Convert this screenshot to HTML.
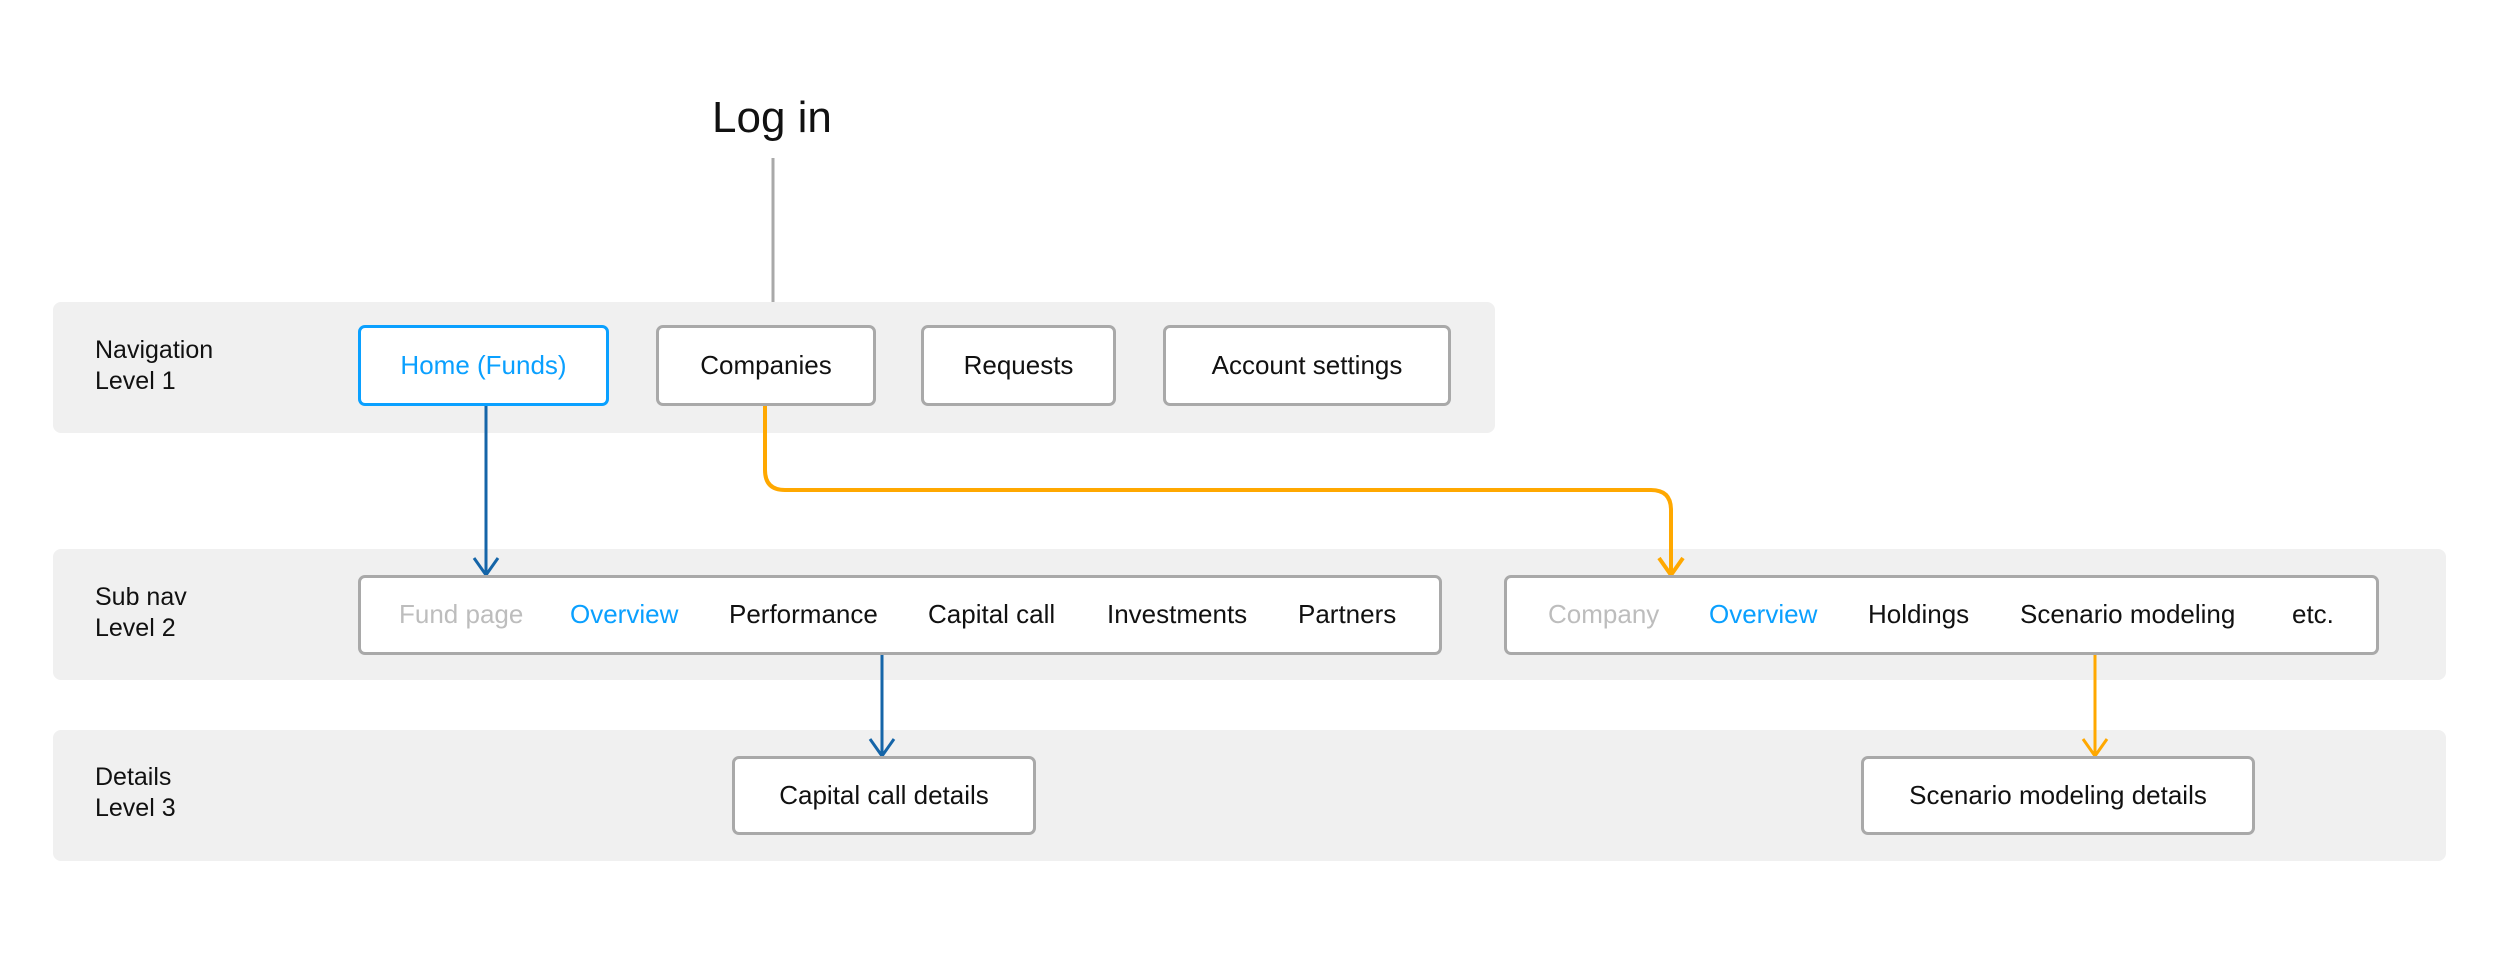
<!DOCTYPE html>
<html><head><style>
body{margin:0;width:2500px;height:976px;background:#fff;position:relative;font-family:"Liberation Sans",sans-serif;overflow:hidden}
.band{position:absolute;background:#f0f0f0;border-radius:8px}
.box{position:absolute;box-sizing:border-box;background:#fff;border:3px solid #a9a9a9;border-radius:7px;display:flex;align-items:center;justify-content:center;font-size:26px;color:#111}
.lbl{position:absolute;font-size:25px;line-height:31px;color:#111}
.t{position:absolute;font-size:26px;color:#111;top:599px}
.g{color:#bdbdbd}.b{color:#0aa0ff}
</style></head><body>
<div class="band" style="left:53px;top:302px;width:1442px;height:131px"></div>
<div class="band" style="left:53px;top:549px;width:2393px;height:131px"></div>
<div class="band" style="left:53px;top:730px;width:2393px;height:131px"></div>
<div style="position:absolute;left:712px;top:93px;font-size:44px;color:#111">Log in</div>
<div class="lbl" style="left:95px;top:335px">Navigation<br>Level 1</div>
<div class="lbl" style="left:95px;top:582px">Sub nav<br>Level 2</div>
<div class="lbl" style="left:95px;top:762px">Details<br>Level 3</div>
<svg style="position:absolute;left:0;top:0" width="2500" height="976" fill="none" stroke-width="3">
<line x1="773" y1="158" x2="773" y2="302" stroke="#a9a9a9"/>
<path d="M486 406V574M474 558L486 575L498 558" stroke="#1565a8"/>
<path d="M882 655V755M870 739L882 756L894 739" stroke="#1565a8"/>
<path d="M765 406V470Q765 490 785 490H1651Q1671 490 1671 510V574M1659 558L1671 575L1683 558" stroke="#ffa800" stroke-width="4"/>
<path d="M2095 655V755M2083 739L2095 756L2107 739" stroke="#ffa800"/>
</svg>
<div class="box" style="left:358px;top:325px;width:251px;height:81px;border-color:#0aa0ff;color:#0aa0ff">Home (Funds)</div>
<div class="box" style="left:656px;top:325px;width:220px;height:81px">Companies</div>
<div class="box" style="left:921px;top:325px;width:195px;height:81px">Requests</div>
<div class="box" style="left:1163px;top:325px;width:288px;height:81px">Account settings</div>
<div class="box" style="left:358px;top:575px;width:1084px;height:80px"></div>
<div class="box" style="left:1504px;top:575px;width:875px;height:80px"></div>
<div class="t g" style="left:399px">Fund page</div>
<div class="t b" style="left:570px">Overview</div>
<div class="t" style="left:729px">Performance</div>
<div class="t" style="left:928px">Capital call</div>
<div class="t" style="left:1107px">Investments</div>
<div class="t" style="left:1298px">Partners</div>
<div class="t g" style="left:1548px">Company</div>
<div class="t b" style="left:1709px">Overview</div>
<div class="t" style="left:1868px">Holdings</div>
<div class="t" style="left:2020px">Scenario modeling</div>
<div class="t" style="left:2292px">etc.</div>
<div class="box" style="left:732px;top:756px;width:304px;height:79px">Capital call details</div>
<div class="box" style="left:1861px;top:756px;width:394px;height:79px">Scenario modeling details</div>
</body></html>
